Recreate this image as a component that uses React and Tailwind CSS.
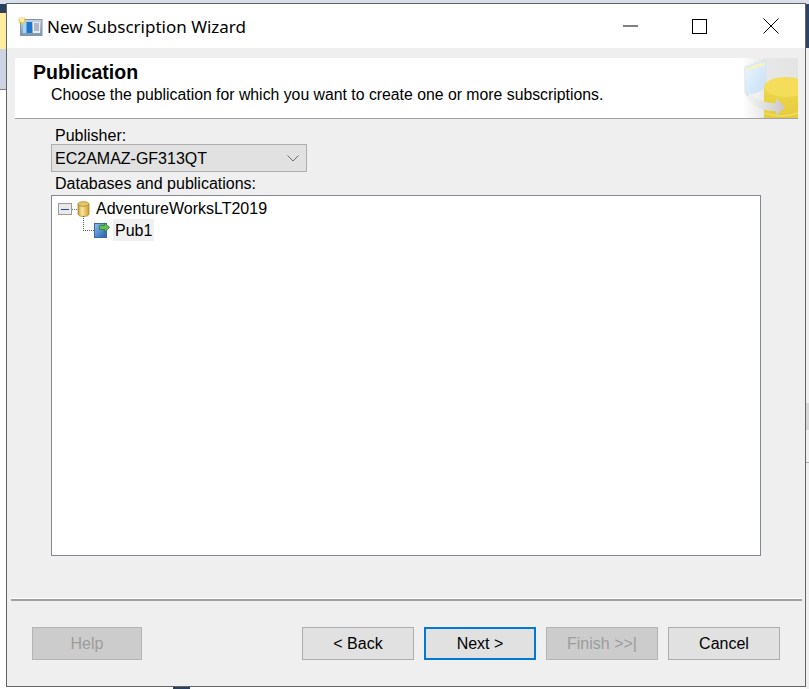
import { useState } from 'react';

const BODY_FONT = "font-['Liberation_Sans',Arial,sans-serif]";

function WizardIcon() {
  return (
    <svg width="25" height="21" viewBox="0 0 25 21" className="shrink-0">
      <defs>
        <linearGradient id="wizFrame" x1="0" y1="0" x2="0" y2="1">
          <stop offset="0" stopColor="#c3d3e6" />
          <stop offset="1" stopColor="#7f95ad" />
        </linearGradient>
      </defs>
      <rect x="2.500" y="3.500" width="21.500" height="16" fill="url(#wizFrame)" stroke="#8195ab" />
      <rect x="5" y="6" width="9" height="11" fill="#1f74cc" />
      <rect x="5" y="6" width="3.500" height="11" fill="#a9d3f2" />
      <rect x="15" y="6" width="7" height="11" fill="#e6ebf1" />
      <path d="M16 8h5M16 10h5M16 12h5M16 14h5" stroke="#7b8795" strokeWidth="1" />
      <path d="M4 0l1 2.500L7.500 1 6.500 3.500 9 4 6.500 5 7.500 7.500 5 6.500 4 9 3 6.500.5 7.500 1.500 5-1 4l2.500-.5L1.500 1 3 2.500z" fill="#f0cf4a" />
      <circle cx="4" cy="4" r="2" fill="#fff3b0" />
    </svg>
  );
}

function HeaderArt() {
  return (
    <svg width="56" height="60" viewBox="0 0 56 60" className="shrink-0">
      <defs>
        <linearGradient id="artFade" x1="0" y1="0" x2="1" y2="0">
          <stop offset="0" stopColor="#ffffff" />
          <stop offset="0.4" stopColor="#e8e8e8" />
          <stop offset="1" stopColor="#e4e4e4" />
        </linearGradient>
        <linearGradient id="artBook" x1="0" y1="0" x2="1" y2="1">
          <stop offset="0" stopColor="#eef6fd" />
          <stop offset="1" stopColor="#c4def7" />
        </linearGradient>
        <linearGradient id="artCyl" x1="0" y1="0" x2="0" y2="1">
          <stop offset="0" stopColor="#ecd64a" />
          <stop offset="1" stopColor="#e6cc3c" />
        </linearGradient>
        <linearGradient id="artArrow" x1="0" y1="0" x2="1" y2="0">
          <stop offset="0" stopColor="#f4f4f4" />
          <stop offset="1" stopColor="#c8c8c8" />
        </linearGradient>
      </defs>
      <rect width="56" height="60" fill="url(#artFade)" />
      <path d="M3 9L24 2v28L5 38 3 34z" fill="url(#artBook)" stroke="#d6e2ef" />
      <path d="M5 10L23 4v3L6 12z" fill="#f8f4b8" />
      <rect x="22" y="29" width="34" height="31" fill="url(#artCyl)" />
      <ellipse cx="44" cy="29" rx="22" ry="10" fill="#f3dd5a" />
      <path d="M22 55q18 6 34 0" stroke="#f0dc62" strokeWidth="1.500" fill="none" />
      <path d="M8 35c6 7 15 10 26 10v-5l9 9-9 9v-5C21 53 10 49 5 40z" fill="url(#artArrow)" />
    </svg>
  );
}

function DatabaseIcon() {
  return (
    <svg width="13" height="16" viewBox="0 0 13 16" className="shrink-0">
      <defs>
        <linearGradient id="dbBody" x1="0" y1="0" x2="1" y2="0">
          <stop offset="0" stopColor="#c4962b" />
          <stop offset="0.35" stopColor="#fbe7a0" />
          <stop offset="1" stopColor="#d29f2a" />
        </linearGradient>
      </defs>
      <path d="M1 3v10c0 1.500 2.500 2.500 5.500 2.500S12 14.500 12 13V3z" fill="url(#dbBody)" stroke="#a9852f" strokeWidth="0.800" />
      <ellipse cx="6.500" cy="3" rx="5.500" ry="2.300" fill="#e6c766" stroke="#a9852f" strokeWidth="0.800" />
    </svg>
  );
}

function PublicationIcon() {
  return (
    <svg width="16" height="16" viewBox="0 0 16 16" className="shrink-0">
      <defs>
        <linearGradient id="pubBook" x1="0" y1="0" x2="1" y2="1">
          <stop offset="0" stopColor="#8fbdec" />
          <stop offset="1" stopColor="#1f60b3" />
        </linearGradient>
      </defs>
      <rect x="0.500" y="1.500" width="12" height="14" fill="url(#pubBook)" stroke="#3a6ba8" />
      <path d="M5.500 3.500h5V1l5 4.500-5 4.500V7.500h-5z" fill="#62c04e" stroke="#2f7f2a" strokeWidth="0.800" />
    </svg>
  );
}

function WinButton({ label, primary, disabled, className = '' }) {
  const look = disabled
    ? 'border-[#b4b4b4] bg-[#cccccc] text-[#9c9c9c]'
    : primary
      ? 'border-2 border-[#0078d7] bg-[#e1e1e1] text-black'
      : 'border-[#adadad] bg-[#e1e1e1] text-black';
  return (
    <button
      type="button"
      disabled={disabled}
      className={`flex h-[33px] items-center justify-center border text-[16px] ${look} ${className}`}
    >
      {label}
    </button>
  );
}

export default function App() {
  const [publisher] = useState('EC2AMAZ-GF313QT');

  return (
    <div className={`relative h-[689px] w-[809px] overflow-hidden bg-white ${BODY_FONT}`}>
      {/* what shows of the desktop behind the dialog */}
      <div className="absolute left-0 top-0 h-[4px] w-full bg-[#d8deea]" />
      <div className="absolute left-0 top-[4px] h-[9px] w-[6px] bg-[#2b3f5c]" />
      <div className="absolute left-0 top-[13px] h-[36px] w-[6px] bg-[#ffec9c]" />
      <div className="absolute left-0 top-[49px] h-[40px] w-[6px] bg-[#cdd5e5]" />
      <div className="absolute left-0 top-[89px] h-px w-[6px] bg-[#7f7f7f]" />
      <div className="absolute right-0 top-[4px] h-[44px] w-[3px] bg-[#2b4567]" />
      <div className="absolute bottom-0 right-0 top-[48px] w-[3px] bg-[#f0f0f0]" />
      <div className="absolute right-0 top-[403px] h-[27px] w-[3px] bg-[#d8d8d8]" />
      <div className="absolute right-0 top-[462px] h-px w-[3px] bg-[#b0b0b0]" />
      <div className="absolute left-[173px] top-[687px] h-[2px] w-[17px] bg-[#2b3f5c]" />

      <div className="relative ml-[6px] mt-[3px] flex h-[684px] w-[800px] flex-col border border-[#646464] bg-[#efefef]">
        {/* title bar */}
        <div className="flex h-[44px] shrink-0 items-center bg-white">
          <div className="ml-[11px] flex items-center">
            <WizardIcon />
            <span className="ml-[4px] pt-[2px] font-['Noto_Sans',sans-serif] text-[17px] text-black">New Subscription Wizard</span>
          </div>
          <div className="ml-auto flex h-full items-center">
            <svg width="16" height="2" viewBox="0 0 16 2" className="mr-[53px]"><path d="M0 1h15" stroke="#000" strokeWidth="1" /></svg>
            <svg width="15" height="15" viewBox="0 0 15 15" className="mr-[56px]"><rect x="0.500" y="0.500" width="14" height="14" fill="none" stroke="#000" /></svg>
            <svg width="16" height="16" viewBox="0 0 16 16" className="mr-[26px]"><path d="M0.500 0.500l15 15M15.500 0.500l-15 15" stroke="#000" strokeWidth="1" /></svg>
          </div>
        </div>

        {/* wizard page header */}
        <div className="ml-[8px] mr-[7px] mt-[10px] flex h-[61px] shrink-0 justify-between border-b border-[#a0a0a0] bg-white">
          <div className="pl-[18px] pt-[3px]">
            <div className="text-[19.500px] font-bold leading-[22px] text-black">Publication</div>
            <div className="ml-[18px] mt-[2px] text-[15.800px] leading-[20px] text-black">
              Choose the publication for which you want to create one or more subscriptions.
            </div>
          </div>
          <HeaderArt />
        </div>

        {/* page body */}
        <div className="ml-[44px] mr-[44px] flex flex-col pt-[9px]">
          <label className="ml-[4px] text-[16px] leading-[16px] text-black">Publisher:</label>
          <div className="flex h-[28px] w-[256px] items-center justify-between border border-[#adadad] bg-[#e1e1e1] pl-[3px] pr-[6px] text-[16px] text-black">
            <span className="pt-[1px]">{publisher}</span>
            <svg width="12" height="7" viewBox="0 0 12 7" className="mr-[1px]"><path d="M0.500 0.500L6 6l5.500-5.500" fill="none" stroke="#6a6a6a" strokeWidth="1" /></svg>
          </div>
          <label className="ml-[4px] mt-[2px] text-[16px] leading-[20px] text-black">Databases and publications:</label>
          <div className="mt-px h-[361px] w-[710px] border border-[#828790] bg-white pl-[6px] pt-[3px]">
            <div className="flex h-[19px] items-center">
              <span className="mt-px flex h-[12px] w-[14px] items-center justify-center border border-[#9a9a9a] bg-[#e9e9e9]">
                <span className="h-px w-[8px] bg-[#2b4a7f]" />
              </span>
              <span className="mt-px w-[5px] border-t border-dotted border-[#707070]" />
              <DatabaseIcon />
              <span className="ml-[6px] text-[16px] text-black">AdventureWorksLT2019</span>
            </div>
            <div className="mt-px flex h-[22px] items-start">
              <span className="ml-[25px] -mt-[3px] h-[15px] w-[11px] border-b border-l border-dotted border-[#606060]" />
              <span className="mt-[3px]"><PublicationIcon /></span>
              <span className="ml-[3px] flex h-[22px] items-center bg-[#f0f0f0] px-[2px] pt-[2px] text-[16px] text-black">Pub1</span>
            </div>
          </div>
        </div>

        {/* footer */}
        <div className="ml-[4px] mr-[3px] mt-[42px] h-[3px] border-t border-white bg-[#a0a0a0]" />
        <div className="mx-[25px] mt-[26px] flex items-center">
          <WinButton label="Help" disabled className="w-[110px]" />
          <WinButton label="< Back" className="ml-[160px] w-[112px]" />
          <WinButton label="Next >" primary className="ml-[10px] w-[112px]" />
          <WinButton label="Finish >>|" disabled className="ml-[10px] w-[112px]" />
          <WinButton label="Cancel" className="ml-[10px] w-[112px]" />
        </div>
      </div>
    </div>
  );
}
